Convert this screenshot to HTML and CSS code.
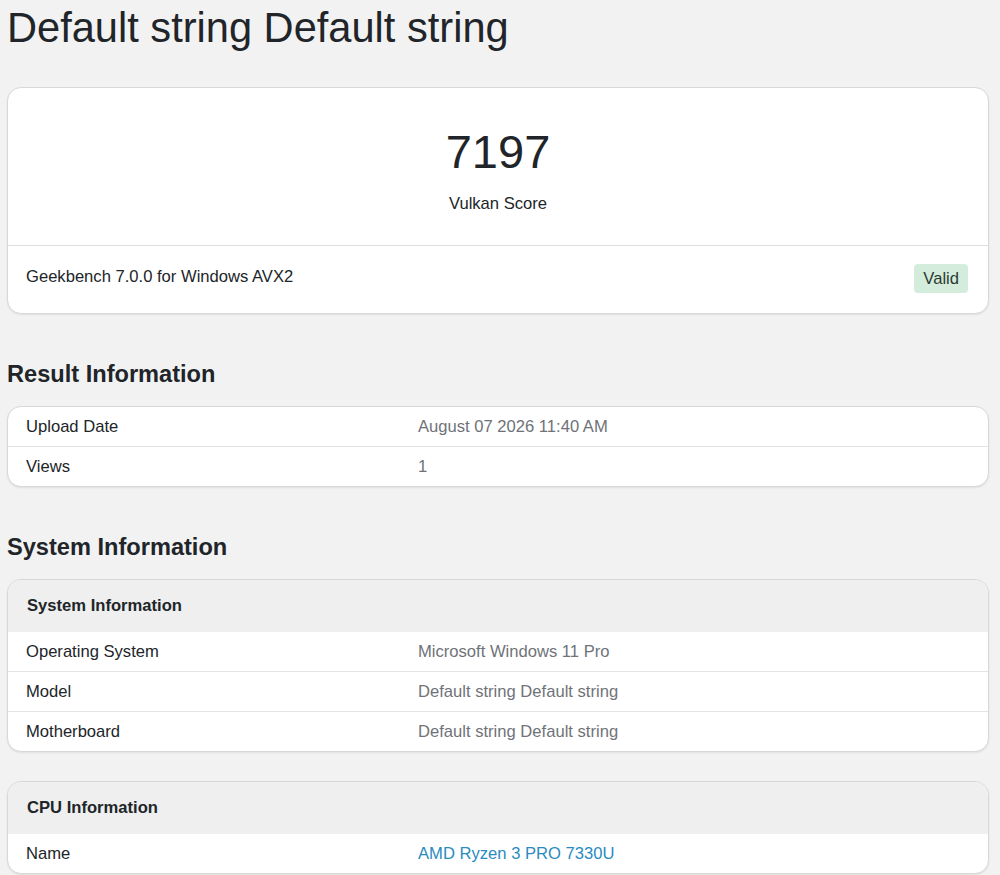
FILE: index.html
```html
<!DOCTYPE html>
<html lang="en">
<head>
<meta charset="utf-8">
<title>Default string Default string - Geekbench</title>
<link rel="stylesheet" href="styles.css">
</head>
<body>
<main class="page">
  <h1 class="device-title">Default string Default string</h1>

  <section class="card score-card">
    <div class="score-main">
      <div class="score-value">7197</div>
      <div class="score-label">Vulkan Score</div>
    </div>
    <div class="score-footer">
      <span class="version">Geekbench 7.0.0 for Windows AVX2</span>
      <span class="badge-valid">Valid</span>
    </div>
  </section>

  <h2 class="section-title">Result Information</h2>
  <section class="card info-table">
    <div class="row"><div class="name">Upload Date</div><div class="value">August 07 2026 11:40 AM</div></div>
    <div class="row"><div class="name">Views</div><div class="value">1</div></div>
  </section>

  <h2 class="section-title">System Information</h2>
  <section class="card info-table">
    <div class="table-head">System Information</div>
    <div class="row"><div class="name">Operating System</div><div class="value">Microsoft Windows 11 Pro</div></div>
    <div class="row"><div class="name">Model</div><div class="value">Default string Default string</div></div>
    <div class="row"><div class="name">Motherboard</div><div class="value">Default string Default string</div></div>
  </section>

  <section class="card info-table spaced">
    <div class="table-head">CPU Information</div>
    <div class="row"><div class="name">Name</div><div class="value"><a class="link" href="#">AMD Ryzen 3 PRO 7330U</a></div></div>
  </section>
</main>
</body>
</html>
```

FILE: styles.css
```css
html, body {
  margin: 0;
  padding: 0;
  background: #f2f2f2;
}

body {
  font-family: "Liberation Sans", Arial, sans-serif;
  font-size: 16.6px;
  color: #212529;
}

.page {
  padding: 0 11px 40px 7px;
}

.device-title {
  margin: 4px 0 0;
  font-size: 41.6px;
  font-weight: 400;
  line-height: 48px;
  color: #212529;
}

.card {
  background: #fff;
  border: 1px solid #d8d8d8;
  border-radius: 14px;
  box-shadow: 0 1px 2px rgba(0, 0, 0, 0.08);
  overflow: hidden;
}

/* score summary */
.score-card {
  margin-top: 35px;
}

.score-main {
  height: 157px;
  display: flex;
  flex-direction: column;
  align-items: center;
  padding-top: 37px;
  box-sizing: border-box;
}

.score-value {
  font-size: 47px;
  line-height: 54px;
  color: #212529;
}

.score-label {
  margin-top: 15px;
  line-height: 20px;
}

.score-footer {
  border-top: 1px solid #dedede;
  height: 68px;
  display: flex;
  align-items: center;
  justify-content: space-between;
  padding: 0 20px 2px 18px;
  box-sizing: border-box;
}

.score-footer .version {
  margin-top: -4px;
}

.badge-valid {
  background: #d4ecdc;
  color: #2b3a31;
  border-radius: 4px;
  padding: 0 9px;
  line-height: 29px;
  height: 29px;
}

/* section headings */
.section-title {
  margin: 46px 0 17px;
  font-size: 23.6px;
  font-weight: 700;
  line-height: 29px;
  color: #212529;
}

/* key / value tables */
.info-table .row {
  display: grid;
  grid-template-columns: 40% 1fr;
  height: 39px;
  box-sizing: border-box;
  align-items: center;
}

.info-table .row + .row {
  border-top: 1px solid #e3e3e3;
  height: 40px;
}

.info-table .name,
.info-table .value {
  padding: 0 18px;
}

.info-table .value {
  color: #6f7378;
}

.table-head {
  background: #efefef;
  height: 52px;
  display: flex;
  align-items: center;
  padding: 0 19px;
  font-weight: 700;
}

.spaced {
  margin-top: 29px;
}

.link {
  color: #2a8bbf;
  text-decoration: none;
}
```
